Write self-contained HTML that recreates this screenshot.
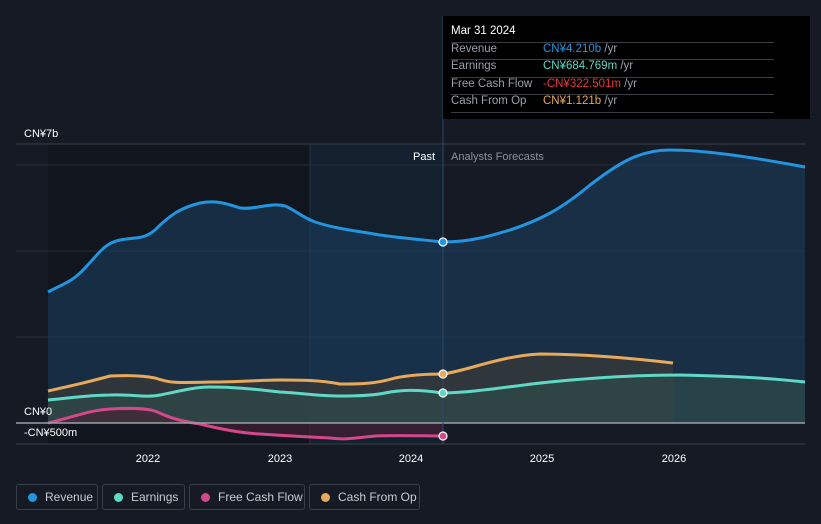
<!DOCTYPE html><html><head><meta charset="utf-8"><style>
body{margin:0;background:#151a24;width:821px;height:524px;overflow:hidden;font-family:"Liberation Sans",sans-serif}
.tt{position:absolute;left:443px;top:16px;width:367px;height:103px;background:#000;}
.tt div{position:absolute;left:8px;font-size:11.5px;color:#9aa0a8;white-space:nowrap}
.tt hr{position:absolute;left:8px;width:323px;margin:0;border:0;border-top:1px solid #3a3d42}
.lg{position:absolute;top:484px;height:26px;border:1px solid #3a404a;border-radius:3px;box-sizing:border-box;color:#c8ccd2;font-size:12px;line-height:24px;padding-left:28px;white-space:nowrap;overflow:hidden}
.lg i{position:absolute;left:11px;top:8px;width:9px;height:9px;border-radius:50%}
</style></head><body>
<svg width="821" height="524" style="position:absolute;left:0;top:0">
<rect x="48" y="144" width="262" height="300" fill="#11151d"/>
<rect x="310" y="144" width="133" height="300" fill="#13202e"/>
<line x1="310" y1="144" x2="310" y2="444" stroke="#1f3447"/>
<g stroke="#252d39"><line x1="16" y1="165" x2="805" y2="165"/><line x1="16" y1="251" x2="805" y2="251"/><line x1="16" y1="337" x2="805" y2="337"/></g>
<line x1="16" y1="144" x2="805" y2="144" stroke="#3a404a"/>
<path d="M48,292 C65,283 72,282 85,268 C100,252 105,243 120,240 C135,237 143,240 155,230 C170,215 180,208 200,203 C215,200 225,203 240,208 C255,210 270,202 285,206 C295,210 300,216 315,222 C340,230 360,231 380,235 C400,238 425,240 443,242 C470,242 490,236 510,230 C540,220 560,210 590,185 C620,162 640,150 670,150 C700,150 740,155 805,167 L805,423 L48,423Z" fill="#1a3d5e" fill-opacity="0.6"/>
<path d="M48,292 C65,283 72,282 85,268 C100,252 105,243 120,240 C135,237 143,240 155,230 C170,215 180,208 200,203 C215,200 225,203 240,208 C255,210 270,202 285,206 C295,210 300,216 315,222 C340,230 360,231 380,235 C400,238 425,240 443,242 C470,242 490,236 510,230 C540,220 560,210 590,185 C620,162 640,150 670,150 C700,150 740,155 805,167" fill="none" stroke="#2394e0" stroke-width="3"/>
<path d="M48,391 C70,386 85,383 110,376 C130,375 145,376 155,378 C170,383 175,383 210,382 C240,382 260,380 280,380 C300,380 320,380 340,384 C360,384 375,384 395,378 C410,375 430,374 443,374 C470,370 500,356 540,354 C580,354 630,358 673,363 L673,423 L48,423Z" fill="#3a3a38" fill-opacity="0.7"/>
<path d="M48,400 C70,398 90,395 110,395 C130,394 145,398 160,395 C180,391 195,387 210,387 C240,387 260,390 280,392 C300,393 320,396 340,396 C360,396 375,395 385,393 C400,390 415,389 443,393 C480,392 510,386 550,382 C600,377 640,375 680,375 C720,376 760,377 805,382 L805,423 L48,423Z" fill="#2d4a48" fill-opacity="0.7"/>
<path d="M48,391 C70,386 85,383 110,376 C130,375 145,376 155,378 C170,383 175,383 210,382 C240,382 260,380 280,380 C300,380 320,380 340,384 C360,384 375,384 395,378 C410,375 430,374 443,374 C470,370 500,356 540,354 C580,354 630,358 673,363" fill="none" stroke="#e8a95a" stroke-width="3"/>
<path d="M48,400 C70,398 90,395 110,395 C130,394 145,398 160,395 C180,391 195,387 210,387 C240,387 260,390 280,392 C300,393 320,396 340,396 C360,396 375,395 385,393 C400,390 415,389 443,393 C480,392 510,386 550,382 C600,377 640,375 680,375 C720,376 760,377 805,382" fill="none" stroke="#5fd8c6" stroke-width="3"/>
<path d="M48,423 C70,418 90,410 110,409 C130,408 145,408 155,411 C170,418 180,421 200,424 C220,429 240,433 260,434 C290,436 310,437 330,438 C345,440 355,438 375,436 C400,435 425,436 443,436 L443,423 L48,423Z" fill="#4a1f33" fill-opacity="0.6"/>
<path d="M48,423 C70,418 90,410 110,409 C130,408 145,408 155,411 C170,418 180,421 200,424 C220,429 240,433 260,434 C290,436 310,437 330,438 C345,440 355,438 375,436 C400,435 425,436 443,436" fill="none" stroke="#d4478a" stroke-width="3"/>
<line x1="16" y1="423" x2="805" y2="423" stroke="#9aa0a8" stroke-width="1.5"/>
<line x1="16" y1="444" x2="805" y2="444" stroke="#3a404a"/>
<line x1="443" y1="16" x2="443" y2="444" stroke="#2d4a66"/>
<g stroke="#fff" stroke-width="1.2"><circle cx="443" cy="242" r="4" fill="#2394e0"/><circle cx="443" cy="374" r="4" fill="#e8a95a"/><circle cx="443" cy="393" r="4" fill="#5fd8c6"/><circle cx="443" cy="436" r="4" fill="#d4478a"/></g>
<g font-size="11" fill="#fff" font-family="Liberation Sans,sans-serif">
<text x="24" y="137">CN¥7b</text><text x="24" y="415">CN¥0</text><text x="24" y="436">-CN¥500m</text>
<text x="435" y="160" text-anchor="end">Past</text><text x="451" y="160" fill="#8a9099">Analysts Forecasts</text>
<g text-anchor="middle"><text x="148" y="462">2022</text><text x="280" y="462">2023</text><text x="411" y="462">2024</text><text x="542" y="462">2025</text><text x="674" y="462">2026</text></g></g>
</svg>
<div class="tt">
<div style="top:9px;color:#fff">Mar 31 2024</div><hr style="top:26px">
<div style="top:27px">Revenue</div><div style="top:27px;left:100px"><span style="color:#2394e0">CN¥4.210b</span> /yr</div><hr style="top:43px">
<div style="top:44px">Earnings</div><div style="top:44px;left:100px"><span style="color:#5fd8c6">CN¥684.769m</span> /yr</div><hr style="top:61px">
<div style="top:62px">Free Cash Flow</div><div style="top:62px;left:100px"><span style="color:#e23a3a">-CN¥322.501m</span> /yr</div><hr style="top:78px">
<div style="top:79px">Cash From Op</div><div style="top:79px;left:100px"><span style="color:#e8a95a">CN¥1.121b</span> /yr</div><hr style="top:96px">
</div>
<div class="lg" style="left:16px;width:82px"><i style="background:#2394e0"></i>Revenue</div>
<div class="lg" style="left:102px;width:83px"><i style="background:#5fd8c6"></i>Earnings</div>
<div class="lg" style="left:189px;width:116px"><i style="background:#d4478a"></i>Free Cash Flow</div>
<div class="lg" style="left:309px;width:111px"><i style="background:#e8a95a"></i>Cash From Op</div>
</body></html>
